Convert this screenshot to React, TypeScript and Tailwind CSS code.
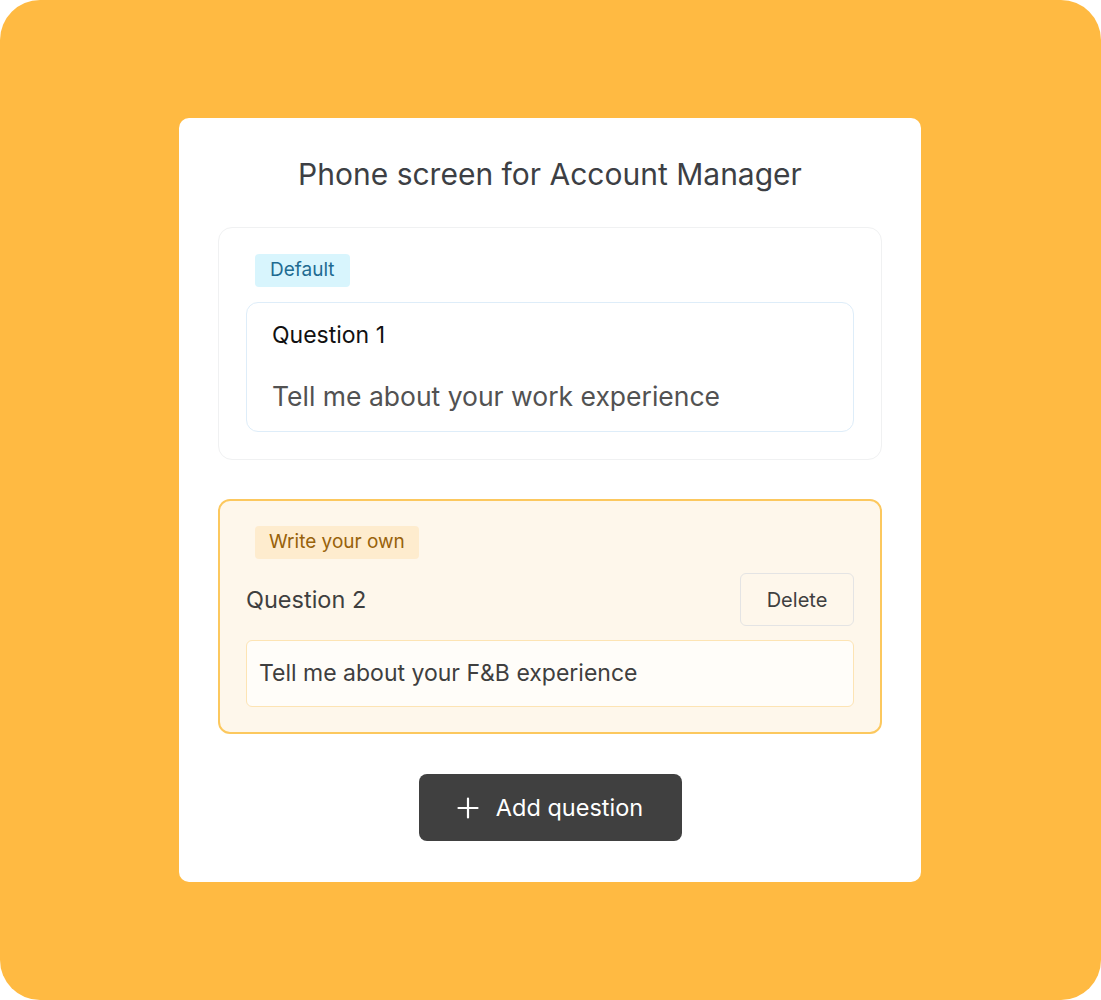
import React from 'react';

const font = { fontFamily: 'Inter, "Noto Sans", sans-serif' };

export default function App() {
  return (
    <div className="w-[1101px] h-[1000px] bg-white" style={font}>
      <div className="w-full h-full bg-[#FFBA42] rounded-[40px] flex items-start pl-[179px] pt-[118px]">
        <div className="w-[742px] bg-white rounded-[10px] px-[39px] pt-[38px] pb-[41px] flex flex-col">
          {/* Title */}
          <h1 className="text-center text-[30px] leading-[36px] text-[#3d3f44]">
            Phone screen for Account Manager
          </h1>

          {/* Default question */}
          <div className="mt-[35px] border border-[#f0f1f2] rounded-[14px] px-[27px] pt-[26px] pb-[27px]">
            <div className="ml-[9px] inline-flex items-center h-[33px] px-[15px] rounded-[4px] bg-[#d8f5fd] text-[#1e6b91] text-[19px]">
              Default
            </div>
            <div className="mt-[15px] border border-[#deedf9] rounded-[12px] px-[25px] pt-[17px] pb-[18px]">
              <div className="text-[23px] leading-[30px] text-[#111]">Question 1</div>
              <div className="mt-[29px] text-[26.5px] leading-[34px] text-[#525252]">
                Tell me about your work experience
              </div>
            </div>
          </div>

          {/* Write your own */}
          <div className="mt-[39px] border-2 border-[#fcc85e] bg-[#fef7eb] rounded-[12px] px-[26px] pt-[25px] pb-[25px]">
            <div className="ml-[9px] inline-flex items-center h-[33px] px-[14px] rounded-[4px] bg-[#feecce] text-[#98620a] text-[19px]">
              Write your own
            </div>
            <div className="mt-[14px] flex items-center justify-between">
              <div className="text-[23.5px] text-[#3f3f3f]">Question 2</div>
              <button className="w-[114px] h-[53px] border border-[#e4e4e4] rounded-[6px] text-[20px] text-[#3f3f3f]">
                Delete
              </button>
            </div>
            <div className="mt-[14px] h-[67px] flex items-center px-[12px] bg-[#fffdf9] border border-[#fde4b4] rounded-[6px] text-[23px] text-[#3f3f3f]">
              Tell me about your F&amp;B experience
            </div>
          </div>

          {/* Add question */}
          <div className="mt-[40px] flex justify-center">
            <button className="w-[263px] h-[67px] bg-[#404040] rounded-[8px] flex items-center justify-center gap-[17px] text-white text-[23.5px]">
              <svg width="22" height="22" viewBox="0 0 22 22" fill="none" stroke="white" strokeWidth="2.2" strokeLinecap="round">
                <path d="M11 1.5v19M1.5 11h19" />
              </svg>
              Add question
            </button>
          </div>
        </div>
      </div>
    </div>
  );
}
